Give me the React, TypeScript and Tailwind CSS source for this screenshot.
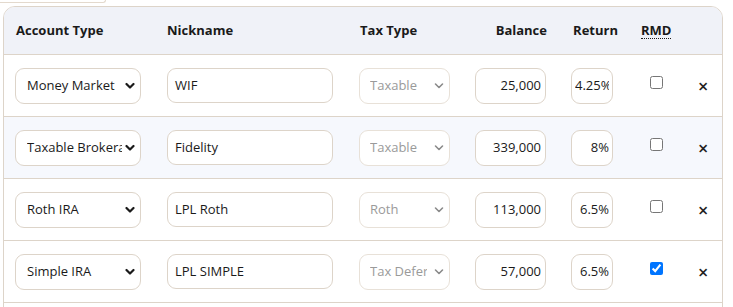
import React from "react";

type Row = {
  type: string;
  nick: string;
  tax: string;
  balance: string;
  ret: string;
  rmd: boolean;
  shaded?: boolean;
};

const rows: Row[] = [
  { type: "Money Market", nick: "WIF", tax: "Taxable", balance: "25,000", ret: "4.25%", rmd: false },
  { type: "Taxable Brokerage", nick: "Fidelity", tax: "Taxable", balance: "339,000", ret: "8%", rmd: false, shaded: true },
  { type: "Roth IRA", nick: "LPL Roth", tax: "Roth", balance: "113,000", ret: "6.5%", rmd: false },
  { type: "Simple IRA", nick: "LPL SIMPLE", tax: "Tax Deferred", balance: "57,000", ret: "6.5%", rmd: true },
];

function Chevron({ light }: { light?: boolean }) {
  return (
    <svg
      width="10"
      height="7"
      viewBox="0 0 10 7"
      className="pointer-events-none absolute right-[6px] top-1/2 -translate-y-1/2"
    >
      <polyline
        points="1.5,1.5 5,5 8.5,1.5"
        fill="none"
        stroke={light ? "#8a8a8a" : "#1a1a1a"}
        strokeWidth={light ? 1.6 : 2.2}
        strokeLinecap="round"
        strokeLinejoin="round"
      />
    </svg>
  );
}

export default function App() {
  const font = { fontFamily: '"Open Sans", "Noto Sans", sans-serif' };
  return (
    <div className="bg-white min-h-[307px] text-[#1a1a1a]" style={font}>
      <div className="h-[3px] w-[106px] border-b border-r border-[#e3d9cd] rounded-br-[8px]" />
      <div className="ml-[3px] mt-[3px] w-[720px] h-[400px] border border-[#ddd4c9] rounded-t-[12px] overflow-hidden">
        {/* header */}
        <div className="flex items-center h-[48px] bg-[#f0f2f8] border-b border-[#ddd4c9] text-[13px] font-bold">
          <div className="w-[163px] pl-[12px]">Account Type</div>
          <div className="w-[193px]">Nickname</div>
          <div className="w-[117px]">Tax Type</div>
          <div className="w-[70px] text-right">Balance</div>
          <div className="w-[71px] text-right">Return</div>
          <div className="ml-[23px]">
            <abbr title="Required Minimum Distribution" className="no-underline border-b border-dotted border-[#1a1a1a] leading-[15px] inline-block">
              RMD
            </abbr>
          </div>
        </div>
        {rows.map((r, i) => (
          <div
            key={i}
            className={`flex items-center h-[62px] border-b border-[#ddd4c9] pl-[11px] text-[13px] ${
              r.shaded ? "bg-[#f6f8fd]" : "bg-white"
            }`}
          >
            <div className="relative w-[126px] h-[36px] shrink-0">
              <div className="w-full h-full rounded-[9px] border border-[#ddd4c9] bg-white flex items-center pl-[11px] pr-[18px]">
                <span className="flex-1 min-w-0 overflow-hidden whitespace-nowrap">{r.type}</span>
              </div>
              <Chevron />
            </div>
            <div className="ml-[26px] w-[166px] h-[35px] shrink-0 rounded-[9px] border border-[#ddd4c9] bg-white flex items-center pl-[7px]">
              {r.nick}
            </div>
            <div className="relative ml-[26px] w-[91px] h-[36px] shrink-0">
              <div className="w-full h-full rounded-[9px] border border-[#e8e1d8] bg-white flex items-center pl-[10px] pr-[22px] text-[#9a9a9a]">
                <span className="flex-1 min-w-0 overflow-hidden whitespace-nowrap">{r.tax}</span>
              </div>
              <Chevron light />
            </div>
            <div className="ml-[25px] w-[71px] h-[36px] shrink-0 rounded-[9px] border border-[#ddd4c9] bg-white flex items-center justify-end pr-[4px]">
              {r.balance}
            </div>
            <div className="ml-[25px] w-[42px] h-[36px] shrink-0 rounded-[9px] border border-[#ddd4c9] bg-white flex items-center pl-[3px] pr-[3px]">
              <span
                className={`flex-1 min-w-0 overflow-hidden whitespace-nowrap ${
                  r.ret.length > 4 ? "text-left" : "text-right"
                }`}
              >
                {r.ret}
              </span>
            </div>
            <div className="w-[86px] flex justify-center shrink-0">
              <input
                type="checkbox"
                defaultChecked={r.rmd}
                className="w-[13px] h-[13px] -mt-[6px]"
              />
            </div>
            <div className="text-[18px] font-semibold leading-none text-[#222] -ml-[1px]">×</div>
          </div>
        ))}
      </div>
    </div>
  );
}
